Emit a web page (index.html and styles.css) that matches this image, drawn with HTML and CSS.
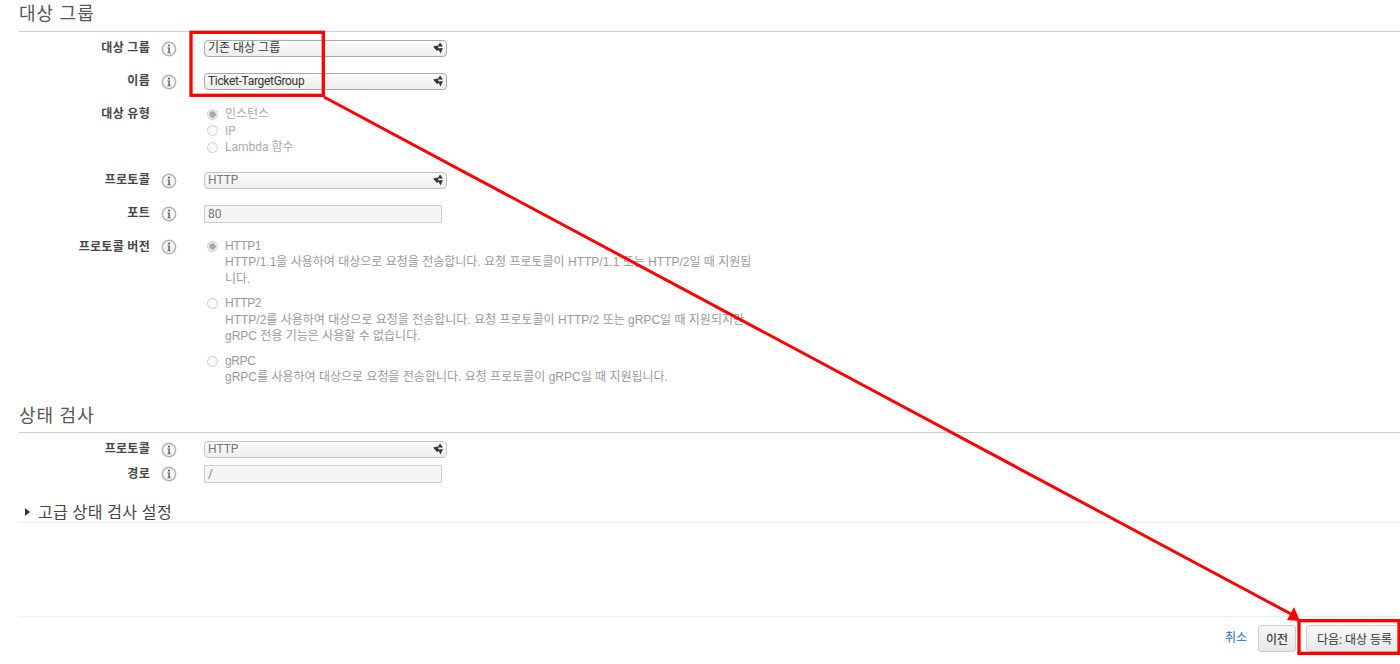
FILE: index.html
```html
<!DOCTYPE html>
<html lang="ko">
<head>
<meta charset="utf-8">
<title>대상 그룹</title>
<link rel="stylesheet" href="styles.css">
</head>
<body>
<svg width="0" height="0" class="defs">
  <symbol id="info" viewBox="0 0 16 16">
    <circle cx="8" cy="8" r="6.7" fill="#f6f6f6" stroke="#b4b4b4" stroke-width="1.5"/>
    <circle cx="8" cy="4.6" r="1.1" fill="#666"/>
    <path d="M6.5 6.6H8.9V11.3H9.7V12.2H6.4V11.3H7.3V7.5H6.5Z" fill="#666"/>
  </symbol>
  <symbol id="updown" viewBox="0 0 12 12">
    <path d="M8 0.5 11 4.5H5.5Z M6 6.5 11 6 8.5 11.5Z M1 4.5 5.5 3.5 7 7.5 5 9Z" fill="#333"/>
  </symbol>
</svg>
<main class="page">
  <section class="section">
    <h2 class="section-title">대상 그룹</h2>
    <div class="row row-first">
      <div class="label">대상 그룹</div><svg class="info"><use href="#info"/></svg>
      <div class="select">기존 대상 그룹<svg class="arrows"><use href="#updown"/></svg></div>
    </div>
    <div class="row row-name">
      <div class="label">이름</div><svg class="info"><use href="#info"/></svg>
      <div class="select select-name">Ticket-TargetGroup<svg class="arrows"><use href="#updown"/></svg></div>
    </div>
    <div class="row row-type">
      <div class="label">대상 유형</div><span class="info-space"></span>
      <div class="radios">
        <div class="radio-line"><span class="radio on"></span>인스턴스</div>
        <div class="radio-line"><span class="radio"></span>IP</div>
        <div class="radio-line"><span class="radio"></span>Lambda 함수</div>
      </div>
    </div>
    <div class="row row-proto">
      <div class="label">프로토콜</div><svg class="info"><use href="#info"/></svg>
      <div class="select disabled">HTTP<svg class="arrows"><use href="#updown"/></svg></div>
    </div>
    <div class="row row-port">
      <div class="label">포트</div><svg class="info"><use href="#info"/></svg>
      <div class="input">80</div>
    </div>
    <div class="row row-version">
      <div class="label">프로토콜 버전</div><svg class="info"><use href="#info"/></svg>
      <div class="versions">
        <div class="version"><span class="radio on"></span><div class="version-text"><span class="version-title">HTTP1</span><br>HTTP/1.1을 사용하여 대상으로 요청을 전송합니다. 요청 프로토콜이 HTTP/1.1 또는 HTTP/2일 때 지원됩<br>니다.</div></div>
        <div class="version"><span class="radio"></span><div class="version-text"><span class="version-title">HTTP2</span><br>HTTP/2를 사용하여 대상으로 요청을 전송합니다. 요청 프로토콜이 HTTP/2 또는 gRPC일 때 지원되지만<br>gRPC 전용 기능은 사용할 수 없습니다.</div></div>
        <div class="version"><span class="radio"></span><div class="version-text"><span class="version-title">gRPC</span><br>gRPC를 사용하여 대상으로 요청을 전송합니다. 요청 프로토콜이 gRPC일 때 지원됩니다.</div></div>
      </div>
    </div>
  </section>
  <section class="section health">
    <h2 class="section-title">상태 검사</h2>
    <div class="row row-first">
      <div class="label">프로토콜</div><svg class="info"><use href="#info"/></svg>
      <div class="select disabled">HTTP<svg class="arrows"><use href="#updown"/></svg></div>
    </div>
    <div class="row row-path">
      <div class="label">경로</div><svg class="info"><use href="#info"/></svg>
      <div class="input">/</div>
    </div>
    <h3 class="advanced"><span class="caret"></span>고급 상태 검사 설정</h3>
  </section>
  <footer class="footer">
    <a class="cancel">취소</a>
    <button class="btn btn-prev">이전</button>
    <button class="btn btn-next">다음: 대상 등록</button>
  </footer>
</main>
<svg class="annotation" width="1400" height="664" viewBox="0 0 1400 664">
  <rect x="191" y="32.3" width="132.3" height="63" fill="none" stroke="#f00" stroke-width="3.3"/>
  <rect x="1299" y="620.7" width="100" height="32.7" fill="none" stroke="#f00" stroke-width="3.3"/>
  <path d="M324 97 1291 614" stroke="#f00" stroke-width="3" fill="none"/>
  <path d="M1300 621 1287 620 1294 607Z" fill="#f00"/>
</svg>
</body>
</html>
```
FILE: styles.css
```css
* { box-sizing: border-box; }
html, body { margin: 0; height: 100%; }
body {
  width: 1400px;
  height: 664px;
  overflow: hidden;
  position: relative;
  background: #fff;
  color: #444;
  font-family: Roboto, "Noto Sans CJK KR", Arial, sans-serif;
  font-size: 12px;
}
.defs { position: absolute; }
.page { padding-left: 19px; height: 664px; display: flex; flex-direction: column; }
.section-title {
  margin: 0;
  height: 32px;
  font-size: 18px;
  line-height: 28px;
  font-weight: 400;
  color: #555;
  border-bottom: 1px solid #ccc;
  letter-spacing: 1px;
}
.section { display: block; }
.row { display: flex; align-items: flex-start; min-height: 18px; }
.label {
  width: 131px;
  text-align: right;
  font-weight: 700;
  color: #444;
  line-height: 16px;
  flex: none;
  letter-spacing: 0.3px;
}
.info { width: 16px; height: 16px; margin: 1px 27px 0 11px; flex: none; }
.info-space { width: 54px; flex: none; }
.select {
  position: relative;
  width: 243px;
  height: 17px;
  padding-left: 3px;
  line-height: 15px;
  border: 1px solid #aaa;
  border-radius: 4px;
  background: linear-gradient(#fbfbfb, #eee);
  color: #333;
  flex: none;
}
.select-name { letter-spacing: -0.33px; }
.select.disabled { color: #777; border-color: #c4c4c4; }
.arrows { position: absolute; right: 2px; top: 1px; width: 12px; height: 12px; }
.input {
  width: 238px;
  height: 18px;
  padding-left: 3px;
  line-height: 16px;
  border: 1px solid #ccc;
  background: #f5f5f5;
  color: #777;
  border-radius: 1px;
  flex: none;
}
.row-first { margin-top: 8px; }
.row-name { margin-top: 15px; }
.row-type { margin-top: 15px; }
.radios { color: #aaa; }
.radio-line { display: flex; align-items: center; height: 16.5px; line-height: 16px; }
.radio {
  flex: none;
  width: 11px;
  height: 11px;
  margin: 0 7px 0 3px;
  border-radius: 50%;
  border: 1px solid #ccc;
  background: #fafafa;
}
.radio.on { background: radial-gradient(circle, #aaa 0 3px, #f2f2f2 3.5px); }
.row-proto { margin-top: 16px; }
.row-port { margin-top: 15px; }
.row-version { margin-top: 15px; }
.row-version .label { padding-top: 1px; }
.versions { width: 560px; color: #999; }
.version { display: flex; align-items: flex-start; margin-bottom: 8px; }
.version .radio { margin-top: 3px; }
.version-text {
  line-height: 16.5px;
  white-space: nowrap;
  font-family: "Liberation Sans", "Noto Sans CJK KR", sans-serif;
}
.version-title { letter-spacing: -0.4px; }
.health { margin-top: 14px; }
.health .section-title { height: 25px; line-height: 16px; }
.health .row-first { margin-top: 8px; }
.row-path { margin-top: 6px; }
.row-path .label { padding-top: 1px; }
.advanced {
  margin: 21px 0 0;
  height: 19px;
  font-size: 16px;
  line-height: 17px;
  font-weight: 400;
  color: #444;
  letter-spacing: 0.4px;
  border-bottom: 1px solid #eee;
  display: flex;
  align-items: flex-start;
}
.caret {
  width: 0;
  height: 0;
  margin: 4px 8px 0 6px;
  border-left: 5px solid #333;
  border-top: 4.5px solid transparent;
  border-bottom: 4.5px solid transparent;
}
.footer {
  margin-top: 93px;
  border-top: 1px solid #eee;
  height: 48px;
  padding: 8px 0 0 0;
  display: flex;
  justify-content: flex-end;
  align-items: flex-start;
}
.cancel { color: #2a6fc0; margin: 3px 11px 0 0; }
.btn {
  height: 27px;
  padding: 0;
  font: 500 12px Roboto, "Noto Sans CJK KR", sans-serif;
  color: #444;
  border: 1px solid #ccc;
  border-radius: 3px;
  background: linear-gradient(#f8f8f8, #e8e8e8);
  flex: none;
}
.btn-prev { width: 38px; margin-right: 10px; }
.btn-next { width: 97px; margin-right: -3px; color: #333; font-weight: 400; }
.annotation { position: absolute; left: 0; top: 0; pointer-events: none; }
```
